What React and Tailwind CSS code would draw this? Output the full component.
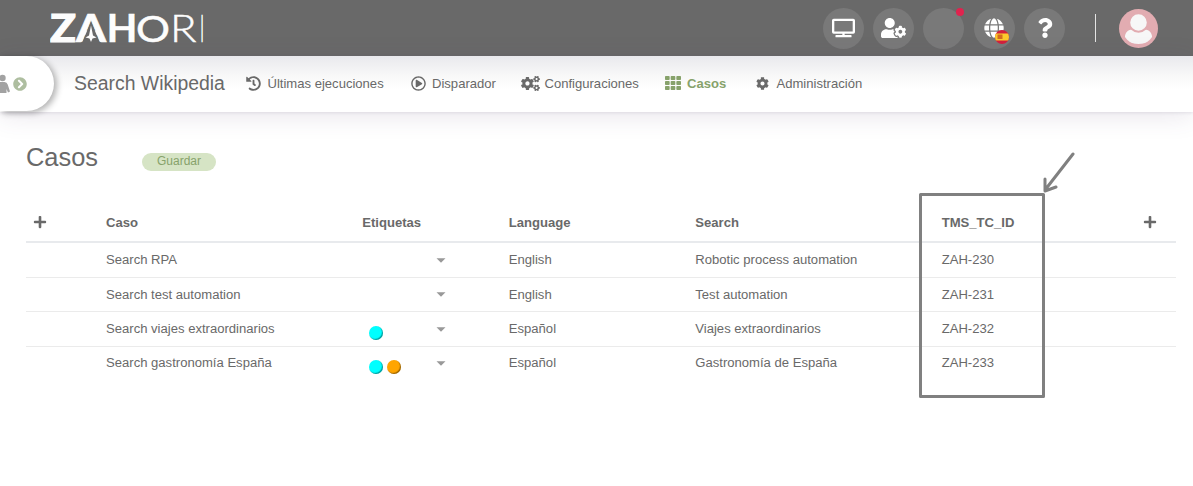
import React from 'react';
import { FaTv, FaUserCog, FaGlobe, FaQuestion, FaHistory, FaRegPlayCircle, FaCogs, FaTh, FaCog, FaPlus, FaChevronCircleRight } from 'react-icons/fa';

function Logo() {
  return (
    <svg className="ml-[50px] h-[56px] w-[170px] shrink-0 opacity-[0.99]" viewBox="0 0 170 56" fill="#fff" stroke="#fff" strokeWidth="0" fontFamily="Lato, sans-serif" fontSize="37.5" aria-label="ZAHORI">
      <text x="0" y="41.500" fontWeight="900" strokeWidth="1" textLength="26" lengthAdjust="spacingAndGlyphs">Z</text>
      <text x="26" y="41.500" fontWeight="900" strokeWidth="0.6" textLength="30" lengthAdjust="spacingAndGlyphs">A</text>
      <path d="M41 21.500 L50 43 H32Z" fill="#696969" />
      <path d="M41 25.500 L43 35.500 L46.500 37.500 L42.500 38.500 L41 42 L39.500 38.500 L35.500 37.500 L39 35.500Z" />
      <text x="56.500" y="41.500" fontWeight="700" strokeWidth="0.3" textLength="31" lengthAdjust="spacingAndGlyphs">H</text>
      <text x="86" y="41.500" fontWeight="400" strokeWidth="0.5" textLength="34" lengthAdjust="spacingAndGlyphs">O</text>
      <text x="120" y="41.500" fontWeight="300" strokeWidth="0.5" textLength="26.500" lengthAdjust="spacingAndGlyphs">R</text>
      <text x="147.500" y="41.500" fontWeight="200" strokeWidth="0.6">I</text>
    </svg>
  );
}

function RoundButton({ children }) {
  return (
    <button className="relative flex h-[41px] w-[41px] items-center justify-center rounded-full bg-[#797979] text-white">
      {children}
    </button>
  );
}

function Flag() {
  return (
    <svg className="absolute left-[21px] top-[22px] h-[14px] w-[14px]" viewBox="0 0 14 14">
      <clipPath id="flag"><circle cx="7" cy="7" r="7" /></clipPath>
      <g clipPath="url(#flag)">
        <rect width="14" height="14" fill="#d3203d" />
        <rect y="3.500" width="14" height="7" fill="#fccb2c" />
        <rect x="2.500" y="4.500" width="5" height="4.500" fill="#d56c1f" />
      </g>
    </svg>
  );
}

function Header() {
  return (
    <header className="flex h-[56px] items-center bg-[#696969]">
      <Logo />
      <div className="ml-auto flex items-center gap-[9.3px]">
        <RoundButton><FaTv className="h-[20px] w-[23px]" /></RoundButton>
        <RoundButton><FaUserCog className="h-[20px] w-[25px]" /></RoundButton>
        <RoundButton><span className="absolute left-[33px] top-0 h-[8px] w-[8px] rounded-full bg-[#e0234e]" /></RoundButton>
        <RoundButton><FaGlobe className="h-[20px] w-[20px]" /><Flag /></RoundButton>
        <RoundButton><FaQuestion className="h-[20px] w-[20px]" /></RoundButton>
      </div>
      <div className="ml-[30px] h-[28px] w-px bg-[#e4e4e4]" />
      <svg className="ml-[23px] mr-[35px] h-[39px] w-[39px]" viewBox="0 0 39 39">
        <clipPath id="avatar"><circle cx="19.5" cy="19.5" r="16" /></clipPath>
        <circle cx="19.5" cy="19.5" r="19.5" fill="#e2acb1" />
        <path d="M6 27C7 21 11 20 19.500 20C28 20 32 21 33 27C34 32 27 35 19.500 35C12 35 5 32 6 27Z" fill="#f7f7f7" clipPath="url(#avatar)" />
        <circle cx="19.500" cy="13.500" r="9.300" fill="#f7f7f7" stroke="#e2acb1" strokeWidth="2" />
      </svg>
    </header>
  );
}

function NavItem({ icon, label, className }) {
  return (
    <a className={'flex items-center pb-[2px] text-[13.07px] leading-none ' + className}>
      {icon}
      <span className="pt-[2px]">{label}</span>
    </a>
  );
}

function Nav() {
  return (
    <nav className="relative flex h-[56px] items-center bg-linear-to-b from-[#e9e9ed] via-[#f8f8f8] via-35% to-white to-60% shadow-[0_1px_3px_0_rgba(82,63,105,0.12),0_4px_26px_0_rgba(82,63,105,0.13)]">
      <div className="-mt-px flex h-[55px] w-[54px] items-center overflow-visible rounded-r-full bg-white shadow-[3px_2px_6px_rgba(0,0,0,0.3)]">
        <svg className="h-[20px] w-[11px]" viewBox="0 0 11 20" fill="#a2a2a2">
          <circle cx="2.500" cy="4" r="3.200" />
          <path d="M0 8H4.500Q7 8 7.700 10.500L10 17.500L8 18.500L6.500 15V19H0Z" />
        </svg>
        <FaChevronCircleRight className="ml-[2px] mt-[1px] h-[14px] w-[14px] text-[#aebea0]" />
      </div>
      <h1 className="ml-[20px] w-[171.5px] whitespace-nowrap text-[19.4px] leading-none">Search Wikipedia</h1>
      <NavItem className="w-[165px] gap-[7px]" label="Últimas ejecuciones" icon={<FaHistory className="h-[15px] w-[15px]" />} />
      <NavItem className="w-[110.5px] gap-[6.5px]" label="Disparador" icon={<FaRegPlayCircle className="h-[15px] w-[15px]" />} />
      <NavItem className="w-[144px] gap-[4.5px]" label="Configuraciones" icon={<FaCogs className="h-[15px] w-[19px]" />} />
      <NavItem className="w-[91px] gap-[6px] font-bold text-[#87a26b]" label="Casos" icon={<FaTh className="h-[16px] w-[16px]" />} />
      <NavItem className="gap-[7.5px]" label="Administración" icon={<FaCog className="h-[13px] w-[13px]" />} />
    </nav>
  );
}

const rows = [
  { name: 'Search RPA', tags: [], lang: 'English', search: 'Robotic process automation', id: 'ZAH-230', height: 'h-[35px]' },
  { name: 'Search test automation', tags: [], lang: 'English', search: 'Test automation', id: 'ZAH-231', height: 'h-[34px]' },
  { name: 'Search viajes extraordinarios', tags: ['bg-[#00ffff]'], lang: 'Español', search: 'Viajes extraordinarios', id: 'ZAH-232', height: 'h-[35px]' },
  { name: 'Search gastronomía España', tags: ['bg-[#00ffff]', 'bg-[#ffa500]'], lang: 'Español', search: 'Gastronomía de España', id: 'ZAH-233', height: 'h-[32px]' },
];

const columns = 'grid grid-cols-[80px_256.2px_146.6px_186.5px_246.4px_201.3px_1fr] items-center';

function CasesTable() {
  return (
    <section className="relative ml-[26px] mr-[17px] mt-[32px] text-[13.09px] leading-[18px]">
      <div className={columns + ' h-[40px] border-b-2 border-[#e8eaed] pt-[2px] font-bold'}>
        <FaPlus className="-mt-[3px] ml-[7px] h-[14px] w-[14px]" />
        <span>Caso</span>
        <span>Etiquetas</span>
        <span>Language</span>
        <span>Search</span>
        <span>TMS_TC_ID</span>
        <FaPlus className="-mt-[3px] h-[14px] w-[14px]" />
      </div>
      {rows.map((row, i) => (
        <div key={row.id} className={columns + ' ' + row.height + (i < 3 ? ' border-b border-[#ebebeb]' : '')}>
          <span />
          <span>{row.name}</span>
          <div className="flex items-center">
            <div className="flex w-[74.3px] gap-[4px] pl-[7px] pt-[7.500px]">
              {row.tags.map((color) => (
                <span key={color} className={'h-[14px] w-[14px] rounded-full shadow-[inset_-1px_-1px_1px_rgba(0,0,0,0.4)] ' + color} />
              ))}
            </div>
            <svg className="h-[5px] w-[10px]" viewBox="0 0 10 5" fill="#999"><path d="M0.500 0.300H9.500L5 4.800Z" /></svg>
          </div>
          <span>{row.lang}</span>
          <span>{row.search}</span>
          <span>{row.id}</span>
          <span />
        </div>
      ))}
      <svg className="absolute left-[892px] top-[-51px] h-[250px] w-[160px]" viewBox="0 0 160 250" fill="none" stroke="#808080" strokeWidth="3" strokeLinejoin="round" strokeLinecap="round">
        <rect x="2.500" y="42.500" width="123" height="202" />
        <path d="M155 2L127 38M127 27V39L138 35" />
      </svg>
    </section>
  );
}

export default function App() {
  return (
    <div className="h-[486px] overflow-hidden bg-white font-['Liberation_Sans',Arial,sans-serif] text-[#696969]">
      <Header />
      <Nav />
      <main>
        <div className="flex h-[59px] items-end pl-[26px]">
          <h2 className="w-[116px] text-[25.4px] leading-[28px]">Casos</h2>
          <button className="flex h-[18px] w-[74px] justify-center rounded-full bg-[#d6e4c5] text-[12px] leading-[16px] text-[#87a26b]">Guardar</button>
        </div>
        <CasesTable />
      </main>
    </div>
  );
}
